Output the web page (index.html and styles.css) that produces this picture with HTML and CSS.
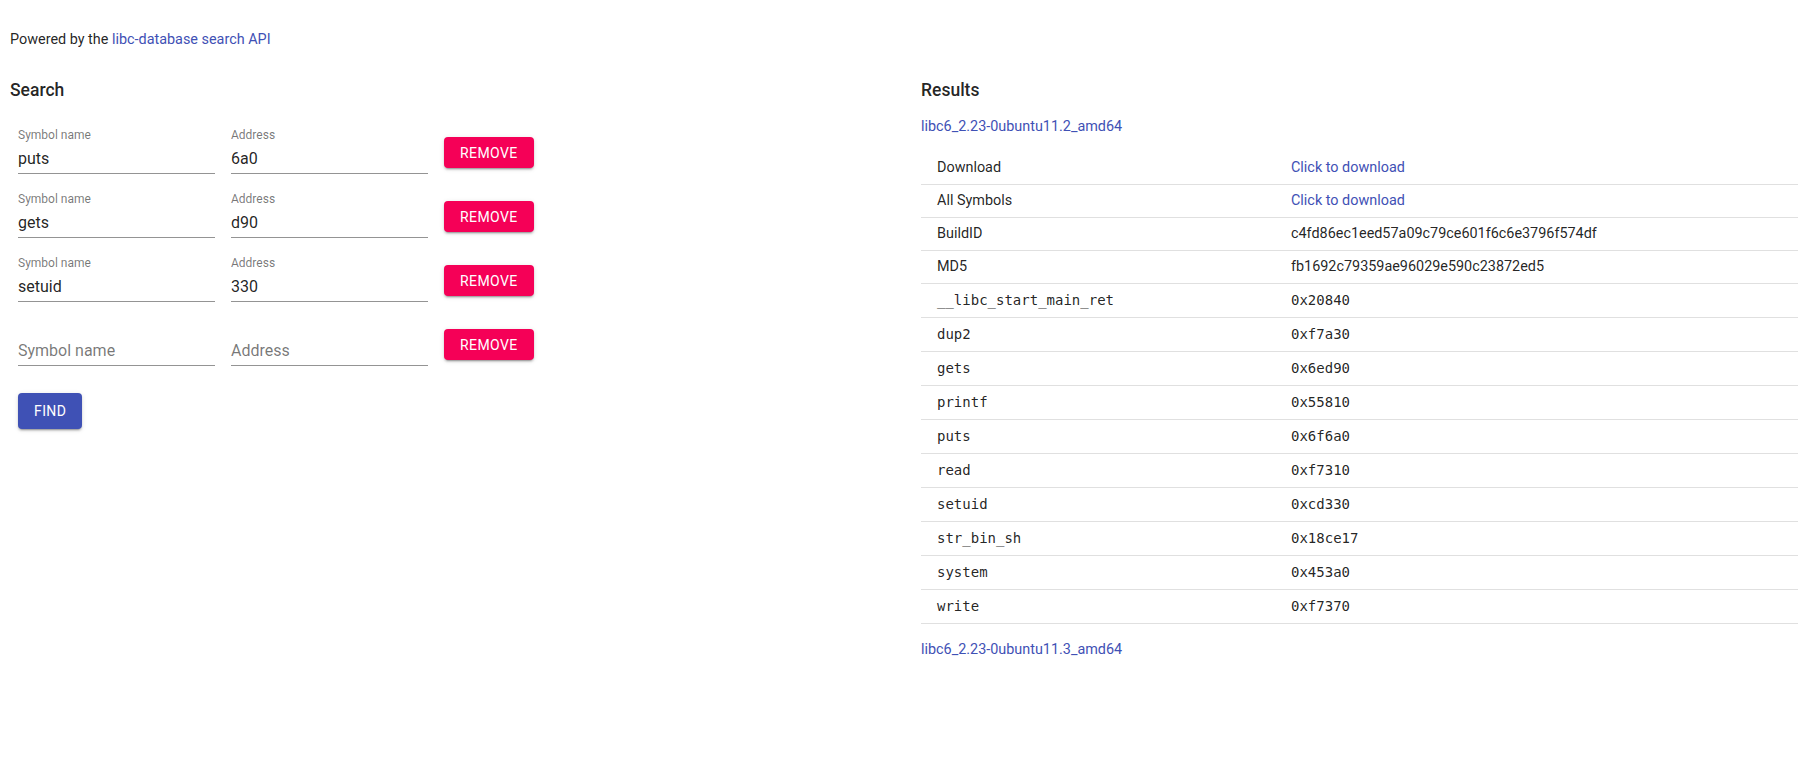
FILE: index.html
```html
<!DOCTYPE html>
<html lang="en">
<head>
<meta charset="utf-8">
<title>libc database search</title>
<link rel="stylesheet" href="styles.css">
</head>
<body>
<div class="page">
  <p class="intro">Powered by the <a class="link" href="#">libc-database search API</a></p>
  <div class="columns">
    <section class="search">
      <h2 class="heading">Search</h2>
      <div class="rows">
        <div class="row">
          <div class="field"><label class="label">Symbol name</label><input class="input" value="puts"></div>
          <div class="field"><label class="label">Address</label><input class="input" value="6a0"></div>
          <button class="btn btn-remove">Remove</button>
        </div>
        <div class="row">
          <div class="field"><label class="label">Symbol name</label><input class="input" value="gets"></div>
          <div class="field"><label class="label">Address</label><input class="input" value="d90"></div>
          <button class="btn btn-remove">Remove</button>
        </div>
        <div class="row">
          <div class="field"><label class="label">Symbol name</label><input class="input" value="setuid"></div>
          <div class="field"><label class="label">Address</label><input class="input" value="330"></div>
          <button class="btn btn-remove">Remove</button>
        </div>
        <div class="row">
          <div class="field"><label class="label label-empty">Symbol name</label><input class="input" value=""></div>
          <div class="field"><label class="label label-empty">Address</label><input class="input" value=""></div>
          <button class="btn btn-remove">Remove</button>
        </div>
      </div>
      <div class="find-row">
        <button class="btn btn-find">Find</button>
      </div>
    </section>
    <section class="results">
      <h2 class="heading">Results</h2>
      <a class="result-link" href="#">libc6_2.23-0ubuntu11.2_amd64</a>
      <table class="table">
        <colgroup><col class="col-name"><col></colgroup>
        <tbody>
          <tr><td>Download</td><td><a class="cell-link" href="#">Click to download</a></td></tr>
          <tr><td>All Symbols</td><td><a class="cell-link" href="#">Click to download</a></td></tr>
          <tr><td>BuildID</td><td>c4fd86ec1eed57a09c79ce601f6c6e3796f574df</td></tr>
          <tr><td>MD5</td><td>fb1692c79359ae96029e590c23872ed5</td></tr>
          <tr class="mono"><td>__libc_start_main_ret</td><td>0x20840</td></tr>
          <tr class="mono"><td>dup2</td><td>0xf7a30</td></tr>
          <tr class="mono"><td>gets</td><td>0x6ed90</td></tr>
          <tr class="mono"><td>printf</td><td>0x55810</td></tr>
          <tr class="mono"><td>puts</td><td>0x6f6a0</td></tr>
          <tr class="mono"><td>read</td><td>0xf7310</td></tr>
          <tr class="mono"><td>setuid</td><td>0xcd330</td></tr>
          <tr class="mono"><td>str_bin_sh</td><td>0x18ce17</td></tr>
          <tr class="mono"><td>system</td><td>0x453a0</td></tr>
          <tr class="mono"><td>write</td><td>0xf7370</td></tr>
        </tbody>
      </table>
      <a class="result-link result-link-last" href="#">libc6_2.23-0ubuntu11.3_amd64</a>
    </section>
  </div>
</div>
</body>
</html>
```
FILE: styles.css
```css
html, body {
  margin: 0;
  padding: 0;
  background: #fff;
}

body {
  font-family: Roboto, "Liberation Sans", Arial, sans-serif;
  color: rgba(0, 0, 0, 0.87);
}

.page {
  padding-left: 10px;
}

.intro {
  margin: 28px 0 0;
  font-size: 14.4px;
  line-height: 24px;
  color: rgba(0, 0, 0, 0.87);
}

.link,
.result-link,
.cell-link {
  color: #3f51b5;
  text-decoration: none;
}

.columns {
  display: grid;
  grid-template-columns: 911px 1fr;
}

.heading {
  margin: 26px 0 0;
  font-size: 17.5px;
  font-weight: 500;
  line-height: 24px;
  color: rgba(0, 0, 0, 0.87);
}

/* search form */
.rows {
  margin-top: 15px;
}

.row {
  display: flex;
  align-items: center;
  height: 64px;
}

.field {
  position: relative;
  width: 197px;
  height: 48px;
  margin: 9px 8px 7px;
  flex: none;
}

.label {
  position: absolute;
  left: 0;
  top: 3px;
  font-size: 12px;
  line-height: 1;
  color: rgba(0, 0, 0, 0.54);
}

.label-empty {
  top: 25px;
  font-size: 16px;
}

.input {
  display: block;
  box-sizing: content-box;
  width: 100%;
  height: 19px;
  margin: 16px 0 0;
  padding: 7px 0 5px;
  border: 0;
  border-bottom: 1px solid rgba(0, 0, 0, 0.42);
  background: transparent;
  font-family: Roboto, "Liberation Sans", Arial, sans-serif;
  font-size: 16px;
  line-height: 19px;
  color: rgba(0, 0, 0, 0.87);
  outline: none;
}

.btn {
  display: inline-flex;
  align-items: center;
  justify-content: center;
  box-sizing: border-box;
  min-width: 64px;
  padding: 0 16px;
  border: 0;
  border-radius: 4px;
  font-family: Roboto, "Liberation Sans", Arial, sans-serif;
  font-size: 14px;
  font-weight: 400;
  letter-spacing: 0.02857em;
  text-transform: uppercase;
  color: #fff;
  box-shadow: 0 3px 1px -2px rgba(0, 0, 0, 0.2), 0 2px 2px 0 rgba(0, 0, 0, 0.14), 0 1px 5px 0 rgba(0, 0, 0, 0.12);
  cursor: pointer;
}

.btn-remove {
  height: 31px;
  margin: 7px 8px 0 8px;
  background: #f50057;
}

.find-row {
  margin-top: 20px;
}

.btn-find {
  height: 36px;
  margin-left: 8px;
  background: #3f51b5;
}

/* results */
.result-link {
  display: block;
  margin-top: 15px;
  font-size: 14.4px;
  line-height: 20px;
}

.result-link-last {
  margin-top: 16px;
}

.table {
  width: 100%;
  margin-top: 15px;
  border-collapse: collapse;
  table-layout: fixed;
}

.col-name {
  width: 354px;
}

.table td {
  padding: 6px 24px 6px 16px;
  border-bottom: 1px solid #e0e0e0;
  font-size: 14.4px;
  line-height: 20px;
  color: rgba(0, 0, 0, 0.87);
  text-align: left;
  white-space: nowrap;
}

.table .mono td {
  font-family: "DejaVu Sans Mono", "Liberation Mono", monospace;
  font-size: 14px;
  line-height: 21px;
}
```
